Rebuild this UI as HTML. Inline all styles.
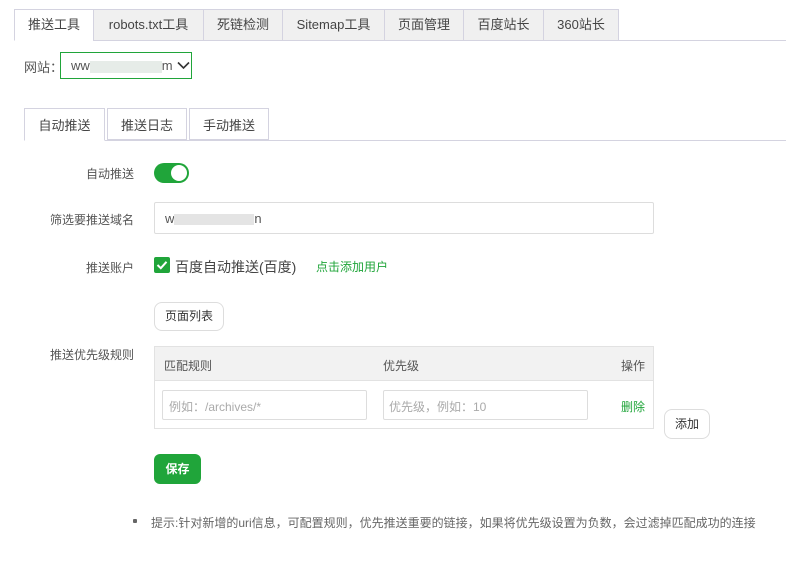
<!DOCTYPE html>
<html><head><meta charset="utf-8"><style>
*{box-sizing:border-box;margin:0;padding:0}
body{width:786px;height:578px;background:#fff;font-family:"Liberation Sans","Noto Sans CJK SC",sans-serif;font-size:12px;color:#555;position:relative;overflow:hidden}
.a{position:absolute}
.tab{position:absolute;top:9px;height:32px;border:1px solid #d4d3e0;background:#f0f0f0;text-align:center;line-height:30px;font-size:13px;color:#444}
.st{position:absolute;top:108px;height:33px;border:1px solid #d4d3e0;background:#fff;text-align:center;line-height:33px;font-size:13px;color:#444}
.lbl{position:absolute;right:652px;font-size:12px;color:#555;white-space:nowrap}
.inp{position:absolute;border:1px solid #ddd;border-radius:2px;background:#fff}
.btn{position:absolute;border:1px solid #ddd;border-radius:8px;background:#fff;text-align:center;color:#333;font-size:12px}
</style></head><body>
<div class="a" style="left:14px;top:40px;width:772px;height:1px;background:#d4d3e0"></div>
<div class="tab" style="left:14px;width:80px;background:#fff;border-bottom-color:#fff">推送工具</div>
<div class="tab" style="left:93px;width:111px">robots.txt工具</div>
<div class="tab" style="left:203px;width:80px">死链检测</div>
<div class="tab" style="left:282px;width:103px">Sitemap工具</div>
<div class="tab" style="left:384px;width:80px">页面管理</div>
<div class="tab" style="left:463px;width:81px">百度站长</div>
<div class="tab" style="left:543px;width:76px">360站长</div>

<div class="a" style="left:24px;top:57px;font-size:13px;color:#555">网站：</div>
<div class="a" style="left:60px;top:52px;width:132px;height:27px;border:1px solid #20a53a;padding:5px 0 0 10px;font-size:13px;color:#555">ww<span style="display:inline-block;width:72px;height:12px;background:#e6ece8;vertical-align:middle"></span>m
<svg class="a" style="left:116px;top:8px" width="13" height="9" viewBox="0 0 13 9"><path d="M1 1.5 6.5 7 12 1.5" fill="none" stroke="#333" stroke-width="1.6"/></svg></div>

<div class="a" style="left:24px;top:140px;width:762px;height:1px;background:#d4d3e0"></div>
<div class="st" style="left:24px;width:81px;border-bottom-color:#fff">自动推送</div>
<div class="st" style="left:107px;width:80px;height:32px">推送日志</div>
<div class="st" style="left:189px;width:80px;height:32px">手动推送</div>

<div class="lbl" style="top:165px">自动推送</div>
<div class="a" style="left:154px;top:163px;width:35px;height:20px;border-radius:10px;background:#20a53a"></div>
<div class="a" style="left:171px;top:165px;width:16px;height:16px;border-radius:50%;background:#fff"></div>

<div class="lbl" style="top:211px">筛选要推送域名</div>
<div class="inp" style="left:154px;top:202px;width:500px;height:32px;padding:8px 10px;font-size:13px;color:#555">w<span style="display:inline-block;width:80px;height:11px;background:#e4e4e4;vertical-align:middle"></span>n</div>

<div class="lbl" style="top:259px">推送账户</div>
<div class="a" style="left:154px;top:257px;width:16px;height:16px;border-radius:2px;background:#20a53a"></div>
<svg class="a" style="left:154px;top:257px" width="16" height="16"><path d="M3.5 8 6.8 11.2 12.5 4.8" fill="none" stroke="#fff" stroke-width="2"/></svg>
<div class="a" style="left:175px;top:257px;font-size:14px;color:#444">百度自动推送(百度)</div>
<div class="a" style="left:316px;top:258px;font-size:12px;color:#20a53a">点击添加用户</div>

<div class="btn" style="left:154px;top:302px;width:70px;height:29px;line-height:27px">页面列表</div>

<div class="lbl" style="top:346px">推送优先级规则</div>
<div class="a" style="left:154px;top:346px;width:500px;height:83px;border:1px solid #e2e2e2"></div>
<div class="a" style="left:155px;top:347px;width:498px;height:34px;background:#f2f2f2;border-bottom:1px solid #e2e2e2"></div>
<div class="a" style="left:164px;top:357px">匹配规则</div>
<div class="a" style="left:383px;top:357px">优先级</div>
<div class="a" style="left:621px;top:357px">操作</div>
<div class="inp" style="left:162px;top:390px;width:205px;height:30px;padding:7px 6px;color:#aaa">例如：/archives/*</div>
<div class="inp" style="left:383px;top:390px;width:205px;height:30px;padding:7px 5px;color:#aaa">优先级，例如：10</div>
<div class="a" style="left:621px;top:398px;color:#20a53a">删除</div>
<div class="btn" style="left:664px;top:409px;width:46px;height:30px;line-height:28px">添加</div>

<div class="a" style="left:154px;top:454px;width:47px;height:30px;border-radius:6px;background:#20a53a;color:#fff;text-align:center;line-height:30px;font-weight:bold">保存</div>

<div class="a" style="left:133px;top:519px;width:4px;height:4px;background:#666;border-radius:1px"></div>
<div class="a" style="left:151px;top:514px;color:#666;white-space:nowrap">提示:针对新增的uri信息，可配置规则，优先推送重要的链接，如果将优先级设置为负数，会过滤掉匹配成功的连接</div>
</body></html>
